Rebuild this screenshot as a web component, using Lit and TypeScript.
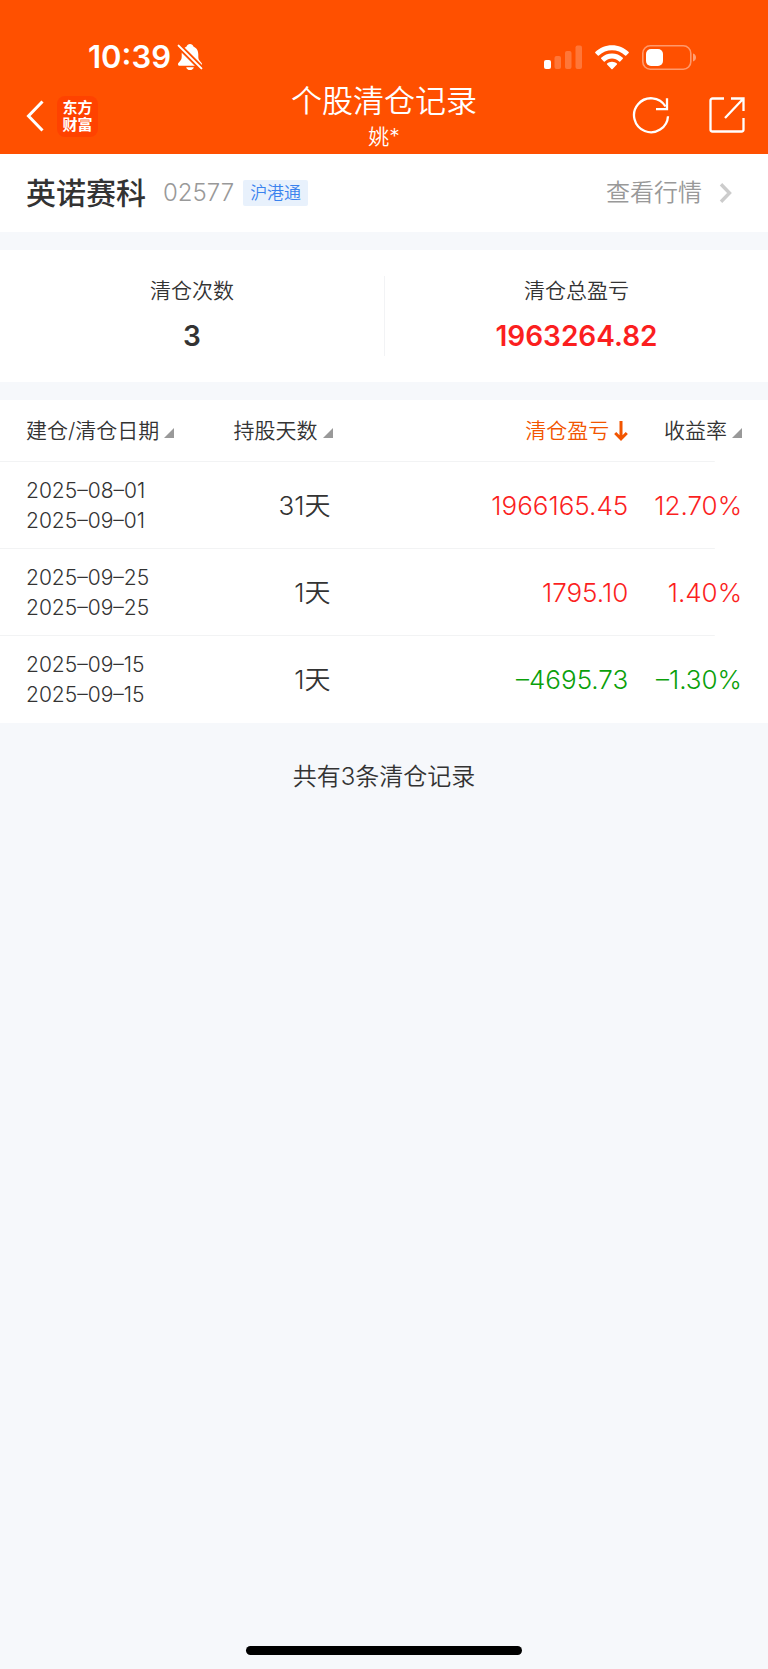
import { LitElement, html, css, nothing } from "lit";
import { customElement, state } from "lit/decorators.js";
import { classMap } from "lit/directives/class-map.js";

interface ClearRecord {
  opened: string;
  closed: string;
  days: string;
  profit: string;
  rate: string;
  loss: boolean;
}

const RECORDS: ClearRecord[] = [
  { opened: "2025–08–01", closed: "2025–09–01", days: "31天", profit: "1966165.45", rate: "12.70%", loss: false },
  { opened: "2025–09–25", closed: "2025–09–25", days: "1天", profit: "1795.10", rate: "1.40%", loss: false },
  { opened: "2025–09–15", closed: "2025–09–15", days: "1天", profit: "–4695.73", rate: "–1.30%", loss: true },
];

@customElement("status-bar")
class StatusBar extends LitElement {
  static styles = css`
    :host {
      display: flex;
      justify-content: space-between;
      align-items: center;
      height: 42px;
      padding: 36px 71px 0 88px;
    }
    .left,
    .right {
      display: flex;
      align-items: center;
    }
    .left {
      gap: 6px;
    }
    .right {
      gap: 13px;
    }
    .time {
      font-size: 31px;
      font-weight: 600;
      line-height: 42px;
    }
    svg {
      display: block;
    }
  `;

  render() {
    return html`
      <div class="left">
        <span class="time">10:39</span>
        <svg width="26" height="28" viewBox="0 0 26 28" aria-hidden="true">
          <path fill="#fff" d="M13 1c-1.700 0-3 1-3.400 2.500C6 5 4.700 8 4.700 11.500v2.300c0 2.400-.7 3.300-2.200 4.900-.9 1-1.500 1.600-1.500 2.500 0 1 .8 1.600 1.900 1.600h20.200c1.100 0 1.900-.6 1.900-1.600 0-.9-.6-1.500-1.500-2.500-1.500-1.600-2.200-2.500-2.200-4.900v-2.300c0-3.500-1.300-6.500-4.900-8C16 2 14.700 1 13 1zM9.200 24.200h7.600c-.4 1.800-1.900 2.900-3.800 2.900s-3.400-1.100-3.800-2.900z"/>
          <path stroke="#ff5000" stroke-width="5.600" d="M0 1l26 26"/>
          <path stroke="#fff" stroke-width="2" stroke-linecap="round" d="M1.600 2.600l22.800 22.800"/>
        </svg>
      </div>
      <div class="right">
        <svg width="38" height="25" viewBox="0 0 38 25" fill="#fff" aria-hidden="true">
          <rect x="0" y="15" width="7" height="9" rx="2"/>
          <g opacity=".22">
            <rect x="10.500" y="11" width="6.500" height="13" rx="2"/>
            <rect x="21" y="6" width="6.500" height="18" rx="2"/>
            <rect x="31.500" y="0.500" width="6.500" height="23.500" rx="2"/>
          </g>
        </svg>
        <svg width="34" height="25" viewBox="0 0 34 25" fill="#fff" aria-hidden="true">
          <path d="M17 0.200c6.400 0 12.300 2.500 16.700 6.700.3.300.3.800 0 1.100l-2.500 2.500c-.3.300-.8.300-1.100 0C26.500 7.200 21.900 5.300 17 5.300S7.500 7.200 3.900 10.500c-.3.300-.8.300-1.100 0L.3 8C0 7.700 0 7.200.3 6.900 4.700 2.700 10.600.2 17 .2z"/>
          <path d="M17 8.500c4.100 0 7.900 1.600 10.800 4.200.3.300.3.800 0 1.100l-2.600 2.600c-.3.300-.7.300-1 0-2-1.700-4.500-2.800-7.200-2.800s-5.200 1.100-7.200 2.800c-.3.300-.7.300-1 0l-2.600-2.600c-.3-.3-.3-.8 0-1.100C9.100 10.100 12.900 8.500 17 8.500z"/>
          <path d="M17 16.700c1.900 0 3.600.7 4.900 1.800.3.300.3.800 0 1.100l-4.300 4.400c-.3.300-.9.300-1.200 0l-4.300-4.400c-.3-.3-.3-.8 0-1.100 1.300-1.100 3-1.800 4.900-1.800z"/>
        </svg>
        <svg width="55" height="25" viewBox="0 0 55 25" aria-hidden="true">
          <rect x="0.800" y="0.800" width="48" height="23.400" rx="7.500" fill="none" stroke="#fff" stroke-opacity=".42" stroke-width="1.600"/>
          <path fill="#fff" fill-opacity=".45" d="M51 8.500c2 .6 3 2.200 3 4s-1 3.400-3 4z"/>
          <rect x="4" y="4" width="17" height="17" rx="5" fill="#fff"/>
        </svg>
      </div>
    `;
  }
}

@customElement("nav-bar")
class NavBar extends LitElement {
  static styles = css`
    :host {
      display: grid;
      grid-template-columns: 1fr auto 1fr;
      align-items: center;
      height: 76px;
      padding: 0 22px;
    }
    button {
      display: block;
      margin: 0;
      padding: 0;
      border: 0;
      background: none;
      color: inherit;
      font: inherit;
      cursor: pointer;
    }
    svg {
      display: block;
    }
    .side {
      display: flex;
      align-items: center;
    }
    .start {
      gap: 13px;
      padding-left: 4px;
    }
    .end {
      justify-content: flex-end;
      gap: 38px;
    }
    .logo {
      display: flex;
      flex-direction: column;
      align-items: center;
      justify-content: center;
      width: 41px;
      height: 41px;
      border-radius: 8px;
      background: #ff4200;
      font-size: 15px;
      font-weight: 700;
      line-height: 17px;
    }
    .titles {
      padding-top: 2px;
      text-align: center;
    }
    h1 {
      margin: 0;
      font-size: 31px;
      font-weight: 350;
      line-height: 40px;
    }
    p {
      margin: 0;
      font-size: 21px;
      font-weight: 350;
      line-height: 32px;
    }
  `;

  render() {
    return html`
      <div class="side start">
        <button aria-label="返回">
          <svg width="18" height="32" viewBox="0 0 18 32" fill="none" stroke="#fff" stroke-width="3">
            <path d="M16.500 1.500L2.500 16l14 14.500"/>
          </svg>
        </button>
        <div class="logo"><span>东方</span><span>财富</span></div>
      </div>
      <div class="titles">
        <h1>个股清仓记录</h1>
        <p>姚*</p>
      </div>
      <div class="side end">
        <button aria-label="刷新">
          <svg width="38" height="38" viewBox="0 0 38 38" fill="none" stroke="#fff" stroke-width="2.300">
            <path d="M36 19.200A17 17 0 1 1 33.600 9.500"/>
            <path d="M35 1.200V12.200H24"/>
          </svg>
        </button>
        <button aria-label="分享">
          <svg width="38" height="38" viewBox="0 1 38 38" fill="none" stroke="#fff" stroke-width="2.300">
            <path d="M16 2.500H4.500a2 2 0 0 0-2 2v29a2 2 0 0 0 2 2h29a2 2 0 0 0 2-2V22"/>
            <path d="M23 2.500h12.500V15M35 3L17 22"/>
          </svg>
        </button>
      </div>
    `;
  }
}

@customElement("clear-table")
class ClearTable extends LitElement {
  static styles = css`
    :host {
      display: block;
      background: #fff;
    }
    table {
      width: 100%;
      table-layout: fixed;
      border-collapse: collapse;
    }
    .c-date {
      width: 26%;
    }
    .c-days {
      width: 17.3%;
    }
    .c-profit {
      width: 38.5%;
    }
    tr {
      background: linear-gradient(#f2f3f4, #f2f3f4) 0 100% / calc(100% - 53px) 1px no-repeat;
    }
    tbody tr:last-child {
      background: none;
    }
    th,
    td {
      padding: 0;
      text-align: right;
      font-weight: 350;
      white-space: nowrap;
    }
    th {
      height: 62px;
      font-size: 21px;
      line-height: 30px;
    }
    td {
      height: 87px;
      font-size: 26px;
      line-height: 30px;
    }
    th:first-child,
    td:first-child {
      padding-left: 26px;
      text-align: left;
    }
    td:first-child {
      font-size: 21px;
    }
    td.days {
      padding-right: 2px;
    }
    th:last-child,
    td:last-child {
      padding-right: 26px;
    }
    time {
      display: block;
    }
    button {
      display: inline-flex;
      align-items: center;
      gap: 5px;
      margin: 0;
      padding: 0;
      border: 0;
      background: none;
      color: inherit;
      font: inherit;
      cursor: pointer;
    }
    .active {
      color: #f25500;
    }
    svg {
      display: block;
    }
    .up {
      color: #fb1f1f;
    }
    .down {
      color: #0aa00a;
    }
  `;

  @state() private sortKey = "profit";

  private heading(key: string, label: string) {
    const active = this.sortKey === key;
    return html`
      <th scope="col" aria-sort=${active ? "descending" : nothing}>
        <button class=${classMap({ active })} @click=${() => (this.sortKey = key)}>
          <span>${label}</span>
          ${active
            ? html`<svg width="14" height="22" viewBox="0 0 14 22" fill="none" stroke="currentColor" stroke-width="3"><path d="M7 1v17M1.200 13L7 18.800 12.800 13"/></svg>`
            : html`<svg width="10" height="18" viewBox="0 0 10 18" fill="#999"><path d="M10 6v10H0z"/></svg>`}
        </button>
      </th>
    `;
  }

  render() {
    return html`
      <table>
        <colgroup>
          <col class="c-date" />
          <col class="c-days" />
          <col class="c-profit" />
          <col />
        </colgroup>
        <thead>
          <tr>
            ${this.heading("date", "建仓/清仓日期")}
            ${this.heading("days", "持股天数")}
            ${this.heading("profit", "清仓盈亏")}
            ${this.heading("rate", "收益率")}
          </tr>
        </thead>
        <tbody>
          ${RECORDS.map((r) => {
            const tone = classMap({ up: !r.loss, down: r.loss });
            return html`
              <tr>
                <td><time>${r.opened}</time><time>${r.closed}</time></td>
                <td class="days">${r.days}</td>
                <td class=${tone}>${r.profit}</td>
                <td class=${tone}>${r.rate}</td>
              </tr>
            `;
          })}
        </tbody>
      </table>
    `;
  }
}

@customElement("app-root")
class AppRoot extends LitElement {
  static styles = css`
    :host {
      display: flex;
      flex-direction: column;
      min-height: 100vh;
      background: #f6f8fb;
      color: #333;
      font-family: Inter, "Noto Sans CJK SC", sans-serif;
    }
    header {
      background: #ff5000;
      color: #fff;
    }
    main {
      display: flex;
      flex-direction: column;
      gap: 18px;
      flex: 1;
    }
    .stock {
      display: flex;
      align-items: center;
      height: 78px;
      padding: 0 36px 0 26px;
      background: #fff;
    }
    h2 {
      margin: 0 17px 0 0;
      font-size: 30px;
      font-weight: 500;
      line-height: 40px;
    }
    .code {
      margin-right: 9px;
      color: #999;
      font-size: 24px;
      font-weight: 300;
      line-height: 32px;
    }
    .tag {
      padding: 0 7px;
      border-radius: 2px;
      background: #e8f1fc;
      color: #3a82ee;
      font-size: 17px;
      font-weight: 350;
      line-height: 26px;
    }
    .quote {
      display: flex;
      align-items: center;
      gap: 17px;
      margin-left: auto;
      color: #999;
      font-size: 24px;
      font-weight: 350;
      line-height: 32px;
      text-decoration: none;
    }
    .summary {
      display: grid;
      grid-template-columns: 1fr 1fr;
      margin: 0;
      padding: 26px 0;
      background: #fff;
      text-align: center;
    }
    .summary div + div {
      border-left: 1px solid #f2f3f5;
    }
    dt {
      font-size: 21px;
      font-weight: 350;
      line-height: 30px;
    }
    dd {
      margin: 10px 0 0;
      font-size: 28px;
      font-weight: 600;
      line-height: 40px;
    }
    .red {
      color: #fb1f1f;
    }
    .total {
      margin: 20px 0 0;
      font-size: 24px;
      font-weight: 350;
      line-height: 32px;
      text-align: center;
    }
    footer {
      display: flex;
      justify-content: center;
      padding-bottom: 14px;
    }
    .home {
      width: 36%;
      height: 9px;
      border-radius: 5px;
      background: #000;
    }
  `;

  render() {
    return html`
      <header>
        <status-bar></status-bar>
        <nav-bar></nav-bar>
      </header>
      <main>
        <section class="stock">
          <h2>英诺赛科</h2>
          <span class="code">02577</span>
          <span class="tag">沪港通</span>
          <a class="quote" href="#quote">
            查看行情
            <svg width="13" height="20" viewBox="0 0 13 20" fill="none" stroke="#ccc" stroke-width="3.400">
              <path d="M2 1.200L10.500 10 2 18.800"/>
            </svg>
          </a>
        </section>
        <dl class="summary">
          <div><dt>清仓次数</dt><dd>3</dd></div>
          <div><dt>清仓总盈亏</dt><dd class="red">1963264.82</dd></div>
        </dl>
        <clear-table></clear-table>
        <p class="total">共有3条清仓记录</p>
      </main>
      <footer><div class="home"></div></footer>
    `;
  }
}
